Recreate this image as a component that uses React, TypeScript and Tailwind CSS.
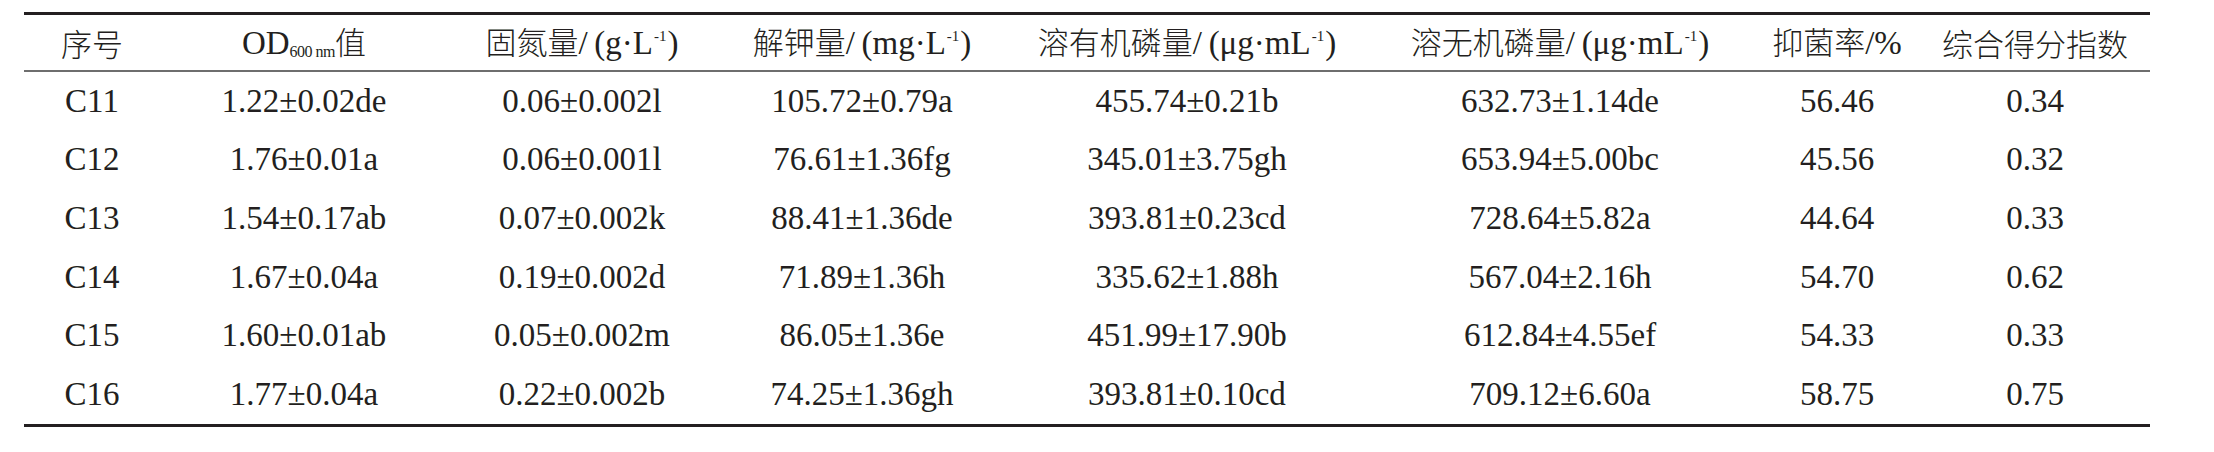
import React from 'react';

const rows = [
  ['C11', '1.22±0.02de', '0.06±0.002l', '105.72±0.79a', '455.74±0.21b', '632.73±1.14de', '56.46', '0.34'],
  ['C12', '1.76±0.01a', '0.06±0.001l', '76.61±1.36fg', '345.01±3.75gh', '653.94±5.00bc', '45.56', '0.32'],
  ['C13', '1.54±0.17ab', '0.07±0.002k', '88.41±1.36de', '393.81±0.23cd', '728.64±5.82a', '44.64', '0.33'],
  ['C14', '1.67±0.04a', '0.19±0.002d', '71.89±1.36h', '335.62±1.88h', '567.04±2.16h', '54.70', '0.62'],
  ['C15', '1.60±0.01ab', '0.05±0.002m', '86.05±1.36e', '451.99±17.90b', '612.84±4.55ef', '54.33', '0.33'],
  ['C16', '1.77±0.04a', '0.22±0.002b', '74.25±1.36gh', '393.81±0.10cd', '709.12±6.60a', '58.75', '0.75'],
];

const grid = 'grid grid-cols-[136px_288px_268px_292px_358px_388px_166px_230px]';

function Cjk({ children }: { children: React.ReactNode }) {
  return <span className="text-[31px] font-['Noto_Sans_CJK_SC',sans-serif] font-light">{children}</span>;
}

// superscript -1 for unit exponents
function Sup() {
  return <sup className="text-[15px] relative -top-[13px] ml-[1px] mr-[1px]">-1</sup>;
}

export default function App() {
  const header: React.ReactNode[] = [
    <Cjk>序号</Cjk>,
    <>
      OD<sub className="text-[16px] tracking-[-0.5px] relative top-[3px]">600 nm</sub>
      <Cjk>值</Cjk>
    </>,
    <>
      <Cjk>固氮量</Cjk>/&thinsp;(g·L<Sup />)
    </>,
    <>
      <Cjk>解钾量</Cjk>/&thinsp;(mg·L<Sup />)
    </>,
    <>
      <Cjk>溶有机磷量</Cjk>/&thinsp;(μg·mL<Sup />)
    </>,
    <>
      <Cjk>溶无机磷量</Cjk>/&thinsp;(μg·mL<Sup />)
    </>,
    <>
      <Cjk>抑菌率</Cjk>/%
    </>,
    <Cjk>综合得分指数</Cjk>,
  ];

  return (
    <div className="w-[2214px] h-[452px] bg-white pt-[12px] pl-[24px] text-[#231f20] font-['Liberation_Serif','Noto_Sans_CJK_SC',serif] text-[33px] leading-none">
      <div className="w-[2126px]">
        <div className="h-[3px] bg-[#231f20]" />
        <div className={`${grid} h-[55px] items-center`}>
          {header.map((h, i) => (
            <div key={i} className="flex items-baseline justify-center whitespace-nowrap">
              {h}
            </div>
          ))}
        </div>
        <div className="h-[2px] bg-[#6e6e6e]" />
        {rows.map((r) => (
          <div key={r[0]} className={`${grid} h-[58.6px] items-center`}>
            {r.map((c, i) => (
              <div key={i} className="text-center whitespace-nowrap">
                {c}
              </div>
            ))}
          </div>
        ))}
        <div className="h-[3px] bg-[#231f20]" />
      </div>
    </div>
  );
}
